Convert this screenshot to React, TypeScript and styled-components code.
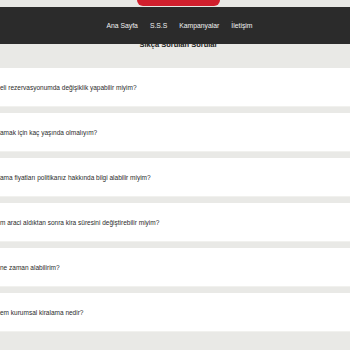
import React from "react";
import styled, { createGlobalStyle } from "styled-components";

const GlobalStyle = createGlobalStyle`
  body {
    margin: 0;
    background: #e9e9e6;
    font-family: "Liberation Sans", Arial, sans-serif;
  }
`;

const TopStrip = styled.div`
  height: 7px;
  background: #e8e8e4;
  display: flex;
  justify-content: center;
`;

const Pill = styled.div`
  width: 83px;
  height: 6px;
  margin-left: 7px;
  background: #d11f2d;
  border-radius: 0 0 12px 12px;
`;

const NavBar = styled.nav`
  position: relative;
  z-index: 2;
  height: 37px;
  background: #2b2b2b;
  display: flex;
  align-items: center;
  justify-content: center;
  gap: 12px;
  padding-left: 9px;
`;

const NavLink = styled.a`
  color: #f2f2f2;
  font-size: 6.8px;
  text-decoration: none;
  cursor: pointer;
`;

const Heading = styled.h1`
  margin: -4px 0 0;
  padding-left: 7px;
  font-size: 7.5px;
  font-weight: bold;
  color: #222;
  text-align: center;
  line-height: 10px;
`;

const List = styled.div`
  margin-top: 18px;
  display: flex;
  flex-direction: column;
  gap: 6px;
`;

const Card = styled.div`
  height: 39px;
  background: #fff;
  border-bottom: 1px solid #f1f1ee;
  box-sizing: border-box;
  display: flex;
  align-items: center;
  overflow: hidden;
  font-size: 6.5px;
  color: #2a2a2a;
  white-space: nowrap;
`;

// prefix sits just left of the screen edge, the rest runs from x=0
const Hidden = styled.span`
  width: 0;
  display: flex;
  justify-content: flex-end;
`;

const faqs = [
  ["Önceden ödem", "eli rezervasyonumda değişiklik yapabilir miyim?"],
  ["Araç kiral", "amak için kaç yaşında olmalıyım?"],
  ["Araç kiral", "ama fiyatları politikanız hakkında bilgi alabilir miyim?"],
  ["Kiraladığı", "m araci aldıktan sonra kira süresini değiştirebilir miyim?"],
  ["Depozito iademi ", "ne zaman alabilirim?"],
  ["Uzun dön", "em kurumsal kiralama nedir?"],
];

export default function App() {
  return (
    <>
      <GlobalStyle />
      <TopStrip>
        <Pill />
      </TopStrip>
      <NavBar>
        <NavLink>Ana Sayfa</NavLink>
        <NavLink>S.S.S</NavLink>
        <NavLink>Kampanyalar</NavLink>
        <NavLink>İletişim</NavLink>
      </NavBar>
      <Heading>Sıkça Sorulan Sorular</Heading>
      <List>
        {faqs.map(([pre, rest], idx) => (
          <Card key={idx}>
            <Hidden>
              <span>{pre.replace(/ $/, "\u00a0")}</span>
            </Hidden>
            <span>{rest}</span>
          </Card>
        ))}
      </List>
    </>
  );
}
